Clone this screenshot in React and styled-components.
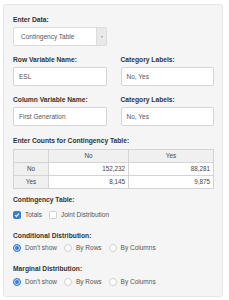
import React from "react";
import styled, { createGlobalStyle } from "styled-components";

const GlobalStyle = createGlobalStyle`
  html, body {
    margin: 0;
    padding: 0;
    background: #fff;
    font-family: "Liberation Sans", Arial, sans-serif;
  }
`;

const Panel = styled.div`
  box-sizing: border-box;
  margin: 4px 6px 0 3px;
  width: 220px;
  height: 293px;
  padding: 10px 8px 0 9px;
  background: #f5f5f5;
  border: 1px solid #e6e6e6;
  border-radius: 3px;
`;

const Group = styled.div`
  margin-bottom: ${(p) => p.mb ?? 9}px;
`;

const Row = styled.div`
  display: grid;
  grid-template-columns: 1fr 1fr;
  column-gap: 14px;
`;

const Label = styled.div`
  font-size: 6.7px;
  font-weight: bold;
  color: #333;
  line-height: 10px;
  margin-bottom: ${(p) => p.mb ?? 2}px;
  white-space: nowrap;
`;

const TextBox = styled.div`
  box-sizing: border-box;
  height: 19px;
  padding: 0 5px;
  display: flex;
  align-items: center;
  background: #fff;
  border: 1px solid #d6d6d6;
  border-radius: 2px;
  font-size: 6.5px;
  color: #555;
`;

const Select = styled.div`
  box-sizing: border-box;
  width: 94px;
  height: 19px;
  display: flex;
  background: #fff;
  border: 1px solid #dcdcdc;
  border-radius: 2px;
  font-size: 6.5px;
  color: #555;
`;

const SelectText = styled.div`
  flex: 1;
  display: flex;
  align-items: center;
  padding-left: 7px;
`;

const Caret = styled.div`
  width: 9px;
  background: #e9e9e9;
  border-left: 1px solid #dcdcdc;
  display: flex;
  align-items: center;
  justify-content: center;
  &::after {
    content: "";
    border-left: 1.5px solid transparent;
    border-right: 1.5px solid transparent;
    border-top: 2px solid #999;
  }
`;

const Table = styled.table`
  width: 201px;
  border-collapse: collapse;
  font-size: 6.3px;
  color: #444;
  td {
    box-sizing: border-box;
    border: 1px solid #d4d4d4;
    height: 13px;
    padding: 0 3px;
    line-height: 1;
  }
`;

const HeadCell = styled.td`
  background: #f0f0f0;
  text-align: center;
  width: ${(p) => (p.w ? `${p.w}px` : "auto")};
`;

const Cell = styled.td`
  background: #fff;
  text-align: right;
`;

const Options = styled.div`
  display: flex;
  align-items: center;
  height: 11px;
  font-size: 6.5px;
  color: #555;
`;

const Option = styled.span`
  display: flex;
  align-items: center;
  margin-right: 7px;
`;

const Box = styled.span`
  box-sizing: border-box;
  width: 8px;
  height: 8px;
  margin-right: 4px;
  border-radius: 1.5px;
  display: flex;
  align-items: center;
  justify-content: center;
  background: ${(p) => (p.on ? "#3a7fd5" : "#fff")};
  border: 1px solid ${(p) => (p.on ? "#3a7fd5" : "#cfcfcf")};
`;

const Radio = styled.span`
  box-sizing: border-box;
  width: 8px;
  height: 8px;
  margin-right: 4px;
  border-radius: 50%;
  background: ${(p) => (p.on ? "#3a7fd5" : "#fff")};
  border: ${(p) => (p.on ? "1px solid #3a7fd5" : "1px solid #d0d0d0")};
  box-shadow: ${(p) => (p.on ? "inset 0 0 0 1px #cfe0f5" : "none")};
`;

const Check = () => (
  <svg width="6" height="6" viewBox="0 0 10 10">
    <path d="M2 5.2 L4.2 7.4 L8.2 2.8" fill="none" stroke="#fff" strokeWidth="1.8" />
  </svg>
);

const RadioRow = () => (
  <Options>
    <Option>
      <Radio on />
      Don't show
    </Option>
    <Option>
      <Radio />
      By Rows
    </Option>
    <Option>
      <Radio />
      By Columns
    </Option>
  </Options>
);

export default function App() {
  return (
    <>
      <GlobalStyle />
      <Panel>
        <Group>
          <Label>Enter Data:</Label>
          <Select>
            <SelectText>Contingency Table</SelectText>
            <Caret />
          </Select>
        </Group>
        <Row>
          <Group>
            <Label>Row Variable Name:</Label>
            <TextBox>ESL</TextBox>
          </Group>
          <Group>
            <Label>Category Labels:</Label>
            <TextBox>No, Yes</TextBox>
          </Group>
        </Row>
        <Row>
          <Group mb={10}>
            <Label>Column Variable Name:</Label>
            <TextBox>First Generation</TextBox>
          </Group>
          <Group mb={10}>
            <Label>Category Labels:</Label>
            <TextBox>No, Yes</TextBox>
          </Group>
        </Row>
        <Group mb={6}>
          <Label mb={3}>Enter Counts for Contingency Table:</Label>
          <Table>
            <tbody>
              <tr>
                <HeadCell w={35}></HeadCell>
                <HeadCell w={80}>No</HeadCell>
                <HeadCell>Yes</HeadCell>
              </tr>
              <tr>
                <HeadCell>No</HeadCell>
                <Cell>152,232</Cell>
                <Cell>88,281</Cell>
              </tr>
              <tr>
                <HeadCell>Yes</HeadCell>
                <Cell>8,145</Cell>
                <Cell>9,875</Cell>
              </tr>
            </tbody>
          </Table>
        </Group>
        <Group mb={11}>
          <Label mb={4}>Contingency Table:</Label>
          <Options>
            <Option>
              <Box on>
                <Check />
              </Box>
              Totals
            </Option>
            <Option>
              <Box />
              Joint Distribution
            </Option>
          </Options>
        </Group>
        <Group mb={11}>
          <Label mb={1}>Conditional Distribution:</Label>
          <RadioRow />
        </Group>
        <Group>
          <Label mb={2}>Marginal Distribution:</Label>
          <RadioRow />
        </Group>
      </Panel>
    </>
  );
}
